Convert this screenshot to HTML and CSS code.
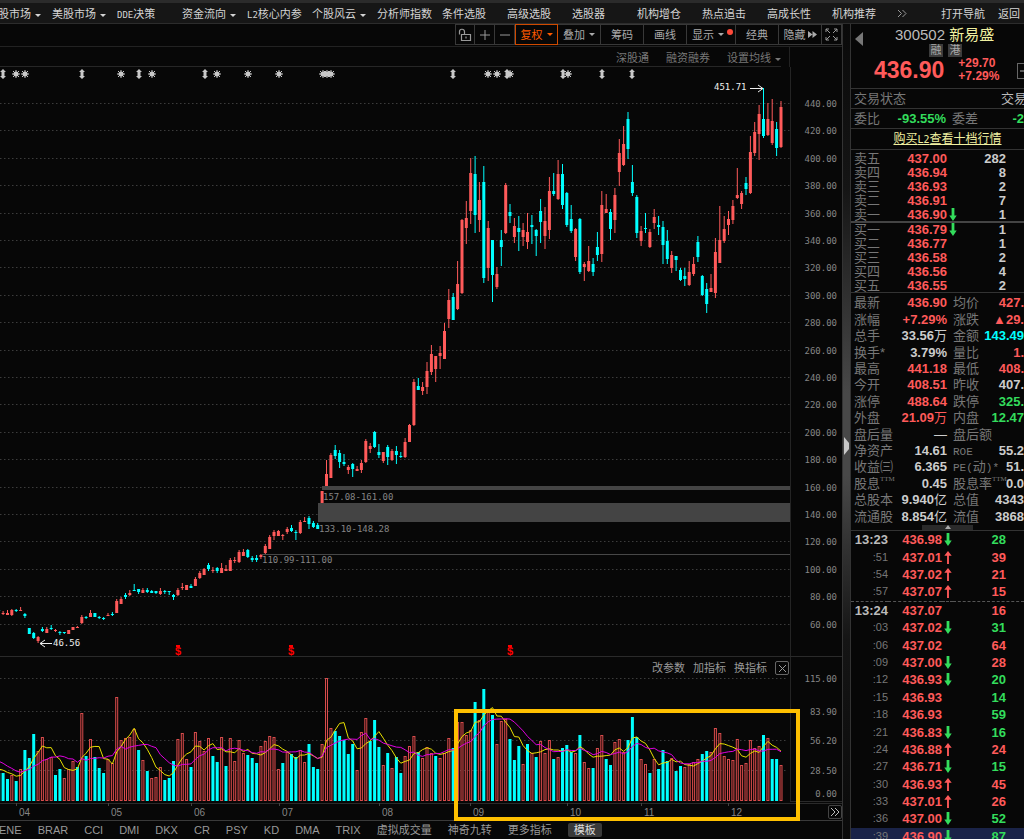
FILE: index.html
```html
<!DOCTYPE html>
<html lang="zh-CN">
<head>
<meta charset="utf-8">
<title>新易盛 300502</title>
<link rel="stylesheet" href="styles.css">
</head>
<body>
<svg class="defs" aria-hidden="true">
  <symbol id="down" viewBox="0 0 8 14"><path d="M2.500 0h3v8H8l-4 6-4-6h2.500z" fill="#33dd5c"/></symbol>
  <symbol id="up" viewBox="0 0 8 14"><path d="M3 14h2V5h3L4 0 0 5h3z" fill="#ff5a5a"/></symbol>
</svg>
<nav class="menu">
  <div class="menu-list">
    <button class="caret">股市场</button><button class="caret">美股市场</button><button><span class="mono">DDE</span>决策</button><button class="caret">资金流向</button><button><span class="mono">L2</span>核心内参</button><button class="caret">个股风云</button><button>分析师指数</button><button>条件选股</button><button>高级选股</button><button>选股器</button><button>机构增仓</button><button>热点追击</button><button>高成长性</button><button>机构推荐</button>
  </div>
  <div class="menu-end">
    <button class="more" aria-label="更多"><svg width="10" height="9" viewBox="0 0 10 9"><path d="M1 1l3.500 3.500L1 8M5.500 1L9 4.500 5.500 8" fill="none" stroke="#999"/></svg></button>
    <button>打开导航</button><button>返回</button>
  </div>
</nav>
<div class="layout">
<main class="left">
  <div class="toolbar">
    <button class="sq" aria-label="解锁"><svg width="14" height="14" viewBox="0 0 14 14"><path d="M3.500 6.500h9v6h-9zM1.500 6.500V4a2.500 2.500 0 0 1 5-.5M6.500 3.500v3M8 8.500v2" fill="none" stroke="#999" stroke-width="1.200"/></svg></button>
    <button class="sq" aria-label="放大"><svg width="12" height="12" viewBox="0 0 12 12"><path d="M6 1v10M1 6h10" stroke="#999"/></svg></button>
    <button class="sq" aria-label="缩小"><svg width="12" height="12" viewBox="0 0 12 12"><path d="M1 6h10" stroke="#999"/></svg></button>
    <button class="caret on">复权</button>
    <button class="caret">叠加</button>
    <button>筹码</button>
    <button>画线</button>
    <button class="caret wide">显示<i class="dot"></i></button>
    <button>经典</button>
    <button class="hide">隐藏<svg width="9" height="7" viewBox="0 0 9 7"><path d="M0 0l4.500 3.500L0 7zM4.500 0L9 3.500 4.500 7z" fill="#aaa"/></svg></button>
    <button class="sq" aria-label="全屏"><svg width="13" height="13" viewBox="0 0 13 13"><path d="M1 4V1h3M1 1l4 4M9 1h3v3M12 1L8 5M1 9v3h3M1 12l4-4M12 9v3H9M12 12L8 8" fill="none" stroke="#999"/></svg></button>
  </div>
  <div class="tags">
    <div class="tag-list"><button>深股通</button><button>融资融券</button><button class="caret">设置均线</button></div>
  </div>
  <div class="chart">
    <svg id="plot" viewBox="0 67 842 754" role="img" aria-label="日K线与成交量"></svg>
    <div class="pane-tools"><button>改参数</button><button>加指标</button><button>换指标</button><button class="close" aria-label="关闭"><svg width="9" height="9" viewBox="0 0 9 9"><path d="M1 1l7 7M8 1L1 8" stroke="#999"/></svg></button></div>
    <button class="next" aria-label="后移"><svg width="10" height="10" viewBox="0 0 10 10"><path d="M1 1l4 4-4 4M5 1l4 4-4 4" fill="none" stroke="#bbb"/></svg></button>
  </div>
  <div class="tabs">
    <button>ENE</button><button>BRAR</button><button>CCI</button><button>DMI</button><button>DKX</button><button>CR</button><button>PSY</button><button>KD</button><button>DMA</button><button>TRIX</button><button>虚拟成交量</button><button>神奇九转</button><button>更多指标</button><button class="tpl">模板</button>
  </div>
</main>
<div class="gutter"><svg width="5" height="18" viewBox="0 0 5 18"><path d="M0 0l5 6v6l-5 6z" fill="#c8c8c8"/></svg></div>
<aside class="side">
  <header class="quote">
    <button class="prev" aria-label="上一个"><svg width="8" height="14" viewBox="0 0 8 14"><path d="M8 0v14L0 7z" fill="#777"/></svg></button>
    <h1><span>300502</span> <b>新易盛</b></h1>
    <div class="badges"><span>融</span><span>港</span></div>
    <div class="price"><strong>436.90</strong><div><p>+29.70</p><p>+7.29%</p></div></div>
    <button class="minus" aria-label="收起"><svg width="10" height="2" viewBox="0 0 10 2"><path d="M0 1h10" stroke="#aaa"/></svg></button>
  </header>
  <div class="line state"><span>交易状态</span><em>交易</em></div>
  <div class="line ratio"><span>委比</span><b class="g">-93.55%</b><span>委差</span><b class="g cut">-2</b></div>
  <div class="line buy"><a href="#l2">购买<span class="mono">L2</span>查看十档行情</a></div>
  <table class="book asks" id="asks"></table>
  <table class="book bids" id="bids"></table>
  <table class="stats" id="stats"></table>
  <button class="fold" aria-label="收起"><svg width="6" height="4" viewBox="0 0 6 4"><path d="M3 0l3 4H0z" fill="#aaa"/></svg></button>
  <table class="ticks" id="ticks"></table>
</aside>
</div>
<script src="app.js"></script>
</body>
</html>
```

FILE: styles.css
```css
* { box-sizing: border-box; margin: 0; padding: 0; }
body {
  background: #070707; color: #ccc; overflow: hidden; height: 100vh;
  font: 11px/14px "Liberation Sans", "Noto Sans CJK SC", sans-serif;
}
button { background: none; border: 0; color: inherit; font: inherit; white-space: nowrap; }
.mono { font-family: "DejaVu Sans Mono", monospace; font-size: 9px; }
.defs { position: absolute; width: 0; height: 0; }
.caret::after {
  content: ""; display: inline-block; vertical-align: middle; margin-left: 4px;
  border: 3px solid transparent; border-top-color: currentColor; border-bottom: 0;
}

.menu {
  display: flex; justify-content: space-between; height: 24px; padding-top: 2px; color: #d4d4d4;
  background: #161616; border-top: 3px solid #2b2b2b; border-bottom: 1px solid #2c2c2c;
}
.menu-list { display: grid; grid-auto-flow: column; grid-auto-columns: 65px; margin-left: -13px; }
.menu-list button { text-align: left; }
.menu-list button:first-child { padding-left: 11px; }
.menu-end { display: flex; flex: none; width: 136px; overflow: hidden; }
.menu-end button { margin-right: 13px; }
.menu-end .more { width: 53px; text-align: left; }

.layout { display: grid; grid-template-columns: minmax(0, 1fr) 7px 174px; }
.left { border-right: 1px solid #333; }
.toolbar { display: flex; justify-content: flex-end; height: 23px; padding-bottom: 1px; border-bottom: 1px solid #222; color: #aaa; }
.toolbar button { width: 43px; border: 1px solid #383838; border-left-width: 0; display: flex; align-items: center; justify-content: center; position: relative; }
.toolbar button:first-child { border-left-width: 1px; }
.toolbar .sq { width: 20px; }
.toolbar .wide { width: 49px; padding-right: 6px; }
.toolbar .on { color: #ff5a00; border: 1px solid #d04a00; }
.toolbar .hide svg { margin-left: 2px; }
.dot { position: absolute; right: 2px; top: 4px; width: 6px; height: 6px; border-radius: 50%; background: #ff4a3a; }
.tags { display: flex; justify-content: flex-end; height: 20px; padding-right: 52px; color: #777; }
.tag-list { display: flex; gap: 17px; flex: 1; justify-content: flex-end; padding: 2px 8px 0 0; border-right: 1px solid #222; position: relative; }
.tag-list::after { content: ""; position: absolute; left: 0; right: 8px; bottom: 0; border-bottom: 1px solid #262626; }
.chart { position: relative; }
.chart > svg { display: block; width: 100%; height: auto; }
.chart text { font: 9px "DejaVu Sans Mono", monospace; fill: #858585; }
.chart .axis { text-anchor: end; }
.chart .month { font: 10px "Liberation Sans", sans-serif; }
.chart .mark { fill: #eee; }
.chart .flag { fill: #f00; font: bold 11px "Liberation Sans", sans-serif; }
.pane-tools { position: absolute; right: 53px; bottom: 146px; display: flex; gap: 8px; color: #999; align-items: center; }
.pane-tools .close, .next { width: 14px; height: 14px; border: 1px solid #666; border-radius: 2px; display: grid; place-content: center; }
.next { position: absolute; right: 0; bottom: 2px; border-color: #444; }
.tabs { display: flex; gap: 16px; height: 18px; align-items: center; color: #999; margin-left: -1px; }
.tabs .tpl { background: #3a3a3a; color: #ddd; padding: 0 6px; border-radius: 2px; line-height: 14px; }

.gutter { display: flex; background: linear-gradient(#0a0a0a, #151515 20%, #484848 45%, #484848 55%, #151515 75%, #0a0a0a); padding: 413px 0 0 1px; }
.side { border-left: 1px solid #333; font-size: 13px; color: #777; overflow: hidden; white-space: nowrap; }
.quote { position: relative; height: 65px; padding-top: 2px; border-bottom: 1px solid #333; color: #ff5a5a; }
.quote h1 { font-size: 15px; line-height: 18px; font-weight: 400; color: #bbb; padding-left: 44px; }
.quote h1 b { color: #f0f0a0; font-weight: 400; }
.prev { position: absolute; left: 4px; top: 8px; }
.badges { display: flex; gap: 5px; padding-left: 78px; }
.badges span { width: 14px; height: 13px; background: #3c3c3c; color: #aaa; font-size: 11px; line-height: 13px; text-align: center; }
.price { display: flex; gap: 14px; padding-left: 23px; line-height: 13px; }
.price strong { font-size: 23px; line-height: 26px; }
.price p { font-weight: 700; font-size: 12px; }
.minus { position: absolute; left: 166px; top: 39px; width: 16px; height: 16px; border: 1px solid #666; display: grid; place-content: center; }
.line { display: flex; height: 20px; line-height: 20px; padding-left: 3px; border-bottom: 1px solid #333; }
.state, .ratio { justify-content: space-between; }
.line em { font-style: normal; color: #bbb; width: 23px; }
.ratio .g { width: 72px; text-align: right; padding-right: 6px; }
.ratio b.cut { flex: 1; padding-right: 0; }
.buy { justify-content: center; padding: 0 0 0 20px; height: 21px; font-size: 12px; }
.buy a { color: #f0f0a0; }
.buy .mono { font-size: 10px; }
table { border-collapse: collapse; table-layout: fixed; width: 100%; }
td { overflow: visible; font-weight: 700; text-align: right; }
td:first-child { padding-left: 3px; text-align: left; font-weight: 400; }
.g { color: #33dd5c; }
.r { color: #ff5a5a; }
.w { color: #ccc; }
.c { color: #00ffff; }
.book { height: 71px; line-height: 13px; border-bottom: 2px solid #444; }
.asks { margin-top: 2px; }
.bids { height: 70px; border-bottom: 1px solid #333; }
.book td:nth-child(1) { width: 40px; }
.book td:nth-child(2) { width: 56px; }
.book td:nth-child(3) { width: 12px; }
.book td:last-child { padding-right: 18px; }
td svg { display: block; margin: 0 auto; }
.stats { height: 232px; line-height: 16px; border-top: 2px solid transparent; }
.stats td:nth-child(1) { width: 42px; }
.stats td:nth-child(2) { width: 54px; }
.stats td:nth-child(3) { width: 36px; padding-left: 6px; text-align: left; font-weight: 400; }
.stats i { font: 11px/11px "Liberation Mono", monospace; }
.stats sup { font: 7px/7px "Liberation Serif", serif; vertical-align: top; }
.stats small { font-size: 13px; font-weight: 400; }
.fold { display: flex; justify-content: center; width: 51px; height: 5px; margin-left: 71px; background: #2a2a2a; position: relative; }
.ticks { height: 315px; line-height: 15px; border-top: 1px solid #333; }
.side .ticks td:nth-child(1) { width: 37px; text-align: right; padding: 0; font-size: 11px; }
.side .ticks .minute td:nth-child(1) { color: #bbb; font-size: 13px; font-weight: 700; }
.ticks td:nth-child(2) { width: 54px; }
.ticks td:nth-child(3) { width: 11px; }
.ticks td:last-child { padding-right: 18px; }
.ticks .split { border-top: 1px dashed #555; }
.ticks .current { background: #1a2348; }
```

FILE: app.js
```js
// Each candle: colour, high, body top, body bottom, low, volume top.
const candles = `c609 610 611 612 773|r611 613 614 615 773c|r610 613 615 615 779c|r609 610 615 616 775|c609 610 611 612 781|r607 610 611 611 769|c613 614 616 618 750|c628 628 634 634 758|c632 633 638 639 734|r636 637 641 643 751|c627 629 631 632 737r|r627 629 633 633 759|c625 628 629 630 757r|r629 630 631 632 775c|c631 632 633 635 769|c632 632 633 634 778r|r630 630 634 634 769|r627 627 630 630 761|r626 627 628 628 767c|r615 617 623 624 713|c616 617 618 619 756|r610 613 617 617 739|c613 613 617 617 757|c616 617 618 619 768|c617 618 619 620 773|r613 615 616 616 759|c612 614 615 616 763r|r599 601 613 613 697|r597 599 604 604 740|c593 595 597 599 738r|r590 593 595 596 737|c584 590 591 591 729r|c589 589 592 594 750|r588 590 593 593 760|c588 590 592 593 771|c590 591 593 593 778r|c591 591 593 594 777r|r588 591 594 595 767|c590 591 592 594 780|c591 591 592 595 778|c594 595 597 600 761|r588 590 595 596 739|r583 587 588 590 733|r585 585 590 590 759|c584 586 588 588 767|r577 579 586 586 732|r571 573 578 579 741|r568 569 575 575 751|c563 565 569 571 738r|r567 570 571 573 756c|c567 568 571 573 762|r563 568 573 573 737|r565 569 571 571 766c|r558 560 571 571 738|r557 560 561 563 761|r550 552 562 563 740|r549 552 556 556 753|c549 550 557 558 755|c556 558 560 562 758|c555 558 560 562 763|r554 555 557 559 746|r544 546 553 554 741|r535 537 549 549 736|r530 532 536 540 737|r530 531 536 536 769|r534 535 536 540 763c|r527 529 532 534 752|c525 528 531 532 754|c530 532 533 540 757|r520 522 533 534 750|r517 521 522 522 762|c516 518 524 529 744|c521 523 527 528 767|c523 525 529 529 769|r491 491 503 503 744|r460 474 486 486 678|r453 455 478 478 728|c445 450 456 459 731|c450 453 462 468 736|c454 462 464 466 740|r465 467 470 474 754c|c463 464 469 477 744|r466 469 471 471 770|r460 463 470 473 732|r439 441 462 463 718|r443 446 449 453 741c|c431 432 447 448 720|c444 452 455 458 747|r452 452 461 463 765|c445 447 457 465 753|r449 451 460 461 768|c446 451 455 464 757|c452 456 457 458 773|r438 442 457 458 756|r424 425 442 442 746|r379 382 425 426 736|c378 386 390 390 752|r382 387 391 395 758|r362 371 387 394 747|r345 354 372 375 753|r356 356 369 382 756c|r346 353 356 369 758|r323 331 359 359 753|r289 300 319 328 738|c293 297 320 320 748|r261 284 309 310 722|r219 220 293 294 722|r201 218 228 244 735|r158 173 211 224 730|c156 174 215 233 702|r182 200 220 232 720|c166 182 278 283 689|r221 228 268 281 712|c240 240 275 302 715|r267 274 287 289 744|c230 240 247 266 721r|r183 185 233 234 719|c204 212 216 223 739|r218 226 237 243 760c|c216 228 232 251 746|r223 230 237 246 764|r213 232 242 249 744c|c215 225 227 244 753r|c229 230 236 256 757|c199 211 222 243 741r|r207 221 236 249 753|r177 191 230 239 740|c173 191 194 196 759|r160 174 199 200 757|c164 174 205 209 748|c192 193 225 227 745|c205 219 231 233 752|r228 229 257 261 753|c218 219 272 274 735|r262 264 267 281 762|r246 261 271 272 768|c258 264 272 276 768|c232 247 255 261 748r|r191 205 254 262 735|r194 209 213 213 759c|c209 212 229 240 765|r188 195 220 233 742|r139 153 172 186 739|r126 144 165 166 752|c112 119 149 159 740|c165 182 193 196 717|c195 197 233 238 737|r226 231 241 246 759|c213 228 229 233 764r|r229 232 247 248 773c|r209 217 223 229 759|c216 225 227 235 769|c221 227 245 264 750|c230 241 259 264 761|r251 255 268 273 758|c256 256 260 271 771|c268 270 280 281 766|c268 276 279 286 767r|r261 272 285 286 764|r257 264 274 276 762|c236 242 257 262 759r|c275 276 295 296 754|c283 289 304 313 751|r274 288 292 292 752|r238 252 293 298 728|r206 240 263 263 733|r216 229 241 243 756|r211 219 225 235 759|r200 206 220 224 760|r168 195 198 199 739|r191 193 204 209 765|c177 183 189 195 763r|r136 152 193 194 740|r122 132 153 156 748|r105 114 134 160 746|c88 119 136 138 735|r103 119 135 136 738|r99 121 143 145 759c|c122 129 148 156 759|r101 107 147 148 765`
  .split('|').map(s => {
    const v = s.match(/\d+/g).map(Number);
    return { kind: s[0], v, vol: /[cr]$/.test(s) ? s.slice(-1) : s[0] };
  });

const RED = '#ff5a5a', CYAN = '#00ffff', BASE = 801;
const xAt = i => -1.27 + 4.37 * i;
let out = '';
const add = s => { out += s; };
const line = (x1, y1, x2, y2, c, extra = '') => add(`<path d="M${x1} ${y1}L${x2} ${y2}" stroke="${c}" fill="none" ${extra}/>`);
const rect = (x, y, w, h, c) => add(`<rect x="${x}" y="${y}" width="${w}" height="${h}" fill="${c}"/>`);
const text = (x, y, t, cls) => add(`<text x="${x}" y="${y}" class="${cls}">${t}</text>`);

const dots = 'stroke-dasharray="1.500 2.500"';
for (let i = 0; i < 20; i++) {
  const y = Math.round(103 + 27.4 * i);
  line(0, y + 0.5, 792, y + 0.5, '#3c3c3c', dots);
  text(837, y + 4, `${440 - 20 * i}.00`, 'axis');
}
[[678, '115.00'], [711, '83.90'], [740, '56.20'], [770, '28.50']].forEach(([y, t]) => {
  line(0, y + 0.5, 788, y + 0.5, '#3c3c3c', dots);
  text(837, y + 4, t, 'axis');
});
text(837, 797, '0.00', 'axis');

line(790.5, 67, 790.5, 802, '#242424');
line(0, 656.5, 842, 656.5, '#2a2a2a');
line(0, 803.5, 842, 803.5, '#2a2a2a');
line(790, 801.5, 842, 801.5, '#2a2a2a');
line(0, 820.5, 842, 820.5, '#3a3a3a');

rect(322, 486, 468, 4, '#444');
rect(318, 503, 472, 19, '#444');
line(262, 554.5, 790, 554.5, '#484848');
text(323, 500, '157.08-161.00', '');
text(319, 532, '133.10-148.28', '');
text(262, 563, '110.99-111.00', '');

candles.forEach(({ kind, v: [h, t, b, l, top], vol }, i) => {
  const x = xAt(i), c = kind === 'r' ? RED : CYAN;
  rect((x - 0.5).toFixed(1), h, 1, Math.max(1, l - h), c);
  rect((x - 1.5).toFixed(1), t, 3, Math.max(1, b - t), c);
  if (vol === 'c') rect((x - 1.5).toFixed(1), top, 3, BASE - top, CYAN);
  else add(`<rect x="${(x - 1).toFixed(1)}" y="${top + 0.5}" width="2" height="${BASE - top - 1}" fill="#1c0808" stroke="#d84c4c"/>`);
});

// Moving averages of volume over 5 and 10 sessions.
const tops = [752, 750, 753, 755, 757, 767, 768, 768, 769].concat(candles.map(c => c.v[4]));
const average = (n, color) => {
  const pts = candles.map((_, i) => {
    const part = tops.slice(i + 10 - n, i + 10);
    return `${xAt(i).toFixed(1)},${(part.reduce((a, b) => a + b) / n).toFixed(1)}`;
  });
  add(`<polyline points="${pts.join(' ')}" fill="none" stroke="${color}"/>`);
};
average(5, '#e8e000');
average(10, '#e000e0');

const star = x => add(`<path d="M${x - 4} 74H${x + 4}M${x} 70V78M${x - 3} 71L${x + 3} 77M${x + 3} 71L${x - 3} 77" stroke="#c8c8c8" stroke-width="1"/><circle cx="${x}" cy="74" r="2.500" fill="#c8c8c8"/>`);
const both = x => add(`<path d="M${x} 69l3 3h-1.500v4h1.500l-3 3-3-3h1.500v-4h-1.500z" fill="#c8c8c8"/>`);
[16, 25, 121, 152, 217, 248, 279, 323, 327, 331, 488, 497, 510, 568].forEach(star);
[3, 82, 139, 205, 453, 507, 563, 602, 632].forEach(both);

text(714, 90, '451.71', 'mark');
line(750, 88.5, 763, 88.5, '#eee');
line(758, 85, '763 88.5L758', 92, '#eee');
text(53, 646, '46.56', 'mark');
line(40, 643.5, 52, 643.5, '#eee');
line(45, 640, '40 643.5L45', 647, '#eee');
[178, 291, 510].forEach(x => { text(x - 3, 655, '$', 'flag'); rect(x - 2, 645, 4, 2, '#f00'); });

[[16, '04'], [108, '05'], [191, '06'], [279, '07'], [379, '08'], [470, '09'], [567, '10'], [641, '11'], [728, '12']].forEach(([x, t]) => {
  line(x + 0.5, 803, x + 0.5, 806, '#444');
  text(x + 3, 816, t, 'month');
});
add('<rect x="456" y="711" width="342" height="108" fill="none" stroke="#ffc000" stroke-width="4"/>');
document.getElementById('plot').innerHTML = out;

const arrow = a => a ? `<svg width="8" height="13"><use href="#${a === 'd' ? 'down' : 'up'}"/></svg>` : '';
const fill = (id, rows) => { document.getElementById(id).innerHTML = '<tbody>' + rows.join('') + '</tbody>'; };
const book = r => `<tr><td>${r[0]}</td><td class="r">${r[1]}</td><td>${arrow(r[3])}</td><td class="w">${r[2]}</td></tr>`;
fill('asks', [['卖五', '437.00', 282], ['卖四', '436.94', 8], ['卖三', '436.93', 2], ['卖二', '436.91', 7], ['卖一', '436.90', 1, 'd']].map(book));
fill('bids', [['买一', '436.79', 1, 'd'], ['买二', '436.77', 1], ['买三', '436.58', 2], ['买四', '436.56', 4], ['买五', '436.55', 2]].map(book));
fill('stats', [
  ['最新', 'r', '436.90', '均价', 'r', '427.'], ['涨幅', 'r', '+7.29%', '涨跌', 'r', '▲29.'],
  ['总手', 'w', '33.56<small>万</small>', '金额', 'c', '143.49'], ['换手*', 'w', '3.79%', '量比', 'r', '1.'],
  ['最高', 'r', '441.18', '最低', 'r', '408.'], ['今开', 'r', '408.51', '昨收', 'w', '407.'],
  ['涨停', 'r', '488.64', '跌停', 'g', '325.'], ['外盘', 'r', '21.09<small>万</small>', '内盘', 'g', '12.47'],
  ['盘后量', 'w', '<small>—</small>', '盘后额', 'w', ''], ['净资产', 'w', '14.61', '<i>ROE</i>', 'w', '55.2'],
  ['收益㈢', 'w', '6.365', '<i>PE(</i>动<i>)*</i>', 'w', '51.'], ['股息<sup>TTM</sup>', 'w', '0.45', '股息率<sup>TTM</sup>', 'w', '0.0'],
  ['总股本', 'w', '9.940<small>亿</small>', '总值', 'w', '4343'], ['流通股', 'w', '8.854<small>亿</small>', '流值', 'w', '3868']
].map(r => `<tr><td>${r[0]}</td><td class="${r[1]}">${r[2]}</td><td>${r[3]}</td><td class="${r[4]}">${r[5]}</td></tr>`));
fill('ticks', `13:23 436.98 d 28 g|:51 437.01 u 39 r|:54 437.02 u 21 r|:57 437.07 u 15 r|13:24 437.07 - 16 r|:03 437.02 d 31 g|:06 437.02 - 64 r|:09 437.00 d 28 r|:12 436.93 d 20 g|:15 436.93 - 14 g|:18 436.93 - 59 g|:21 436.83 d 16 g|:24 436.88 u 24 r|:27 436.71 d 15 g|:30 436.93 u 45 r|:33 437.01 u 26 r|:36 437.00 d 52 g|:39 436.90 d 87 g`.split('|').map((s, i) => {
  const [t, p, a, n, c] = s.split(' ');
  const cls = (t[0] === ':' ? '' : 'minute ') + (i === 4 ? 'split' : i === 17 ? 'current' : '');
  return `<tr class="${cls}"><td>${t}</td><td class="r">${p}</td><td>${arrow(a === '-' ? '' : a)}</td><td class="${c}">${n}</td></tr>`;
}));
```
